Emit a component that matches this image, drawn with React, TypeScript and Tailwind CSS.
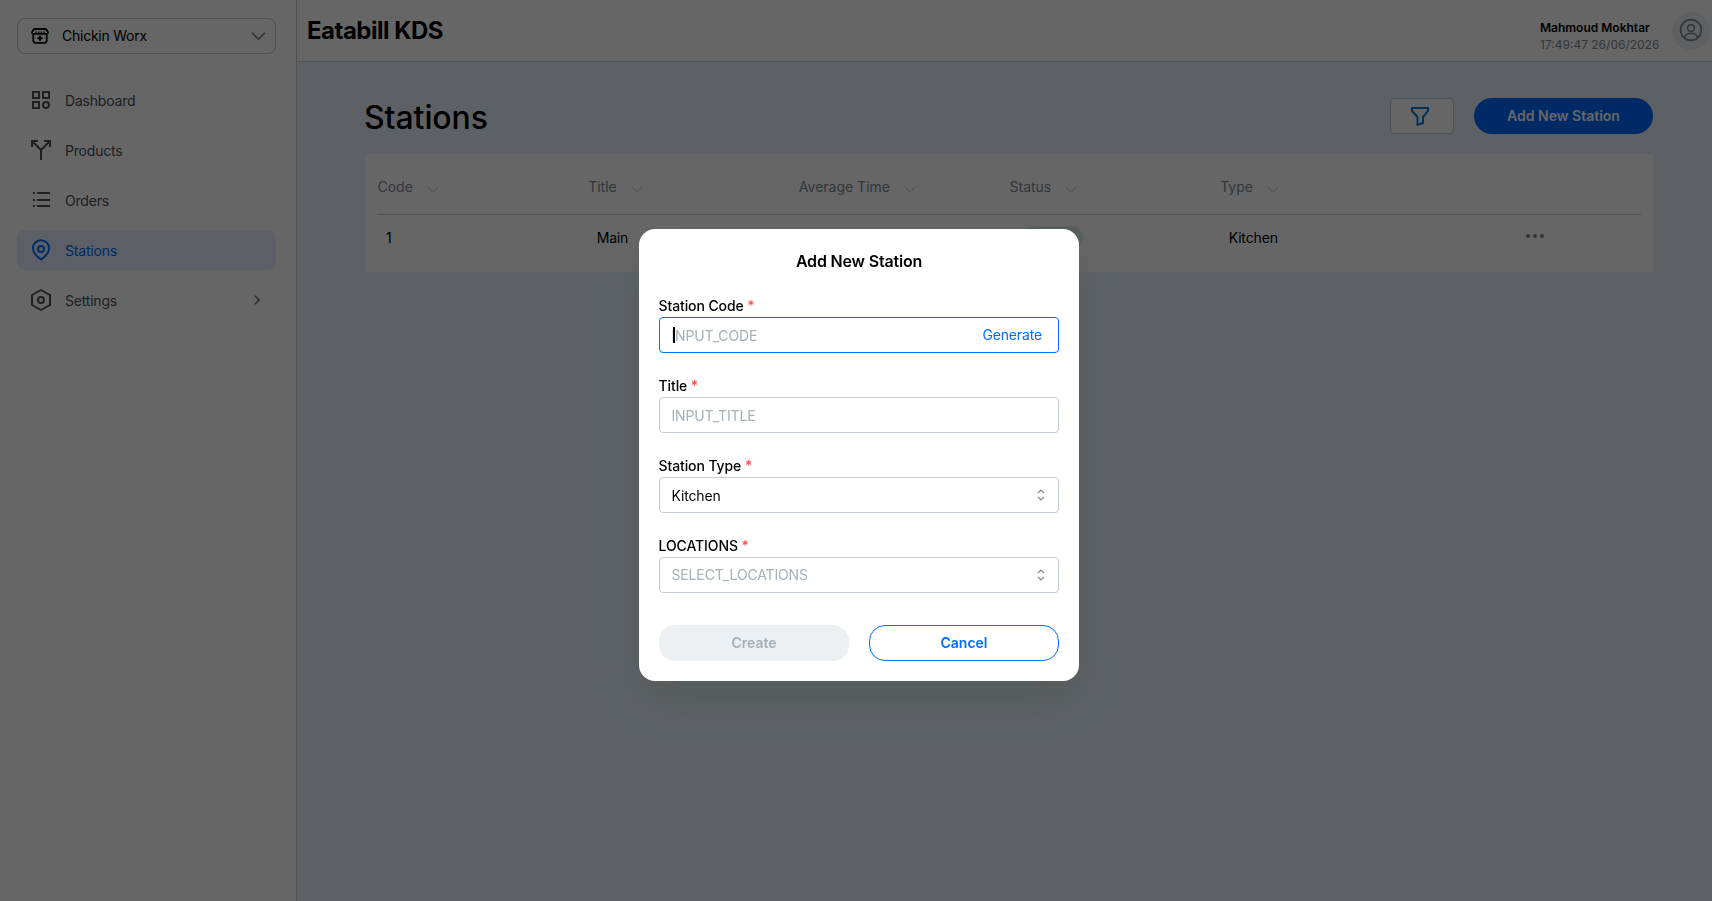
import type { ReactNode } from "react";

const navItems = [
  { id: "dashboard", label: "Dashboard", icon: <DashboardIcon /> },
  { id: "products", label: "Products", icon: <SplitIcon /> },
  { id: "orders", label: "Orders", icon: <ListIcon /> },
  { id: "stations", label: "Stations", icon: <PinIcon />, active: true },
  { id: "settings", label: "Settings", icon: <HexIcon />, nested: true },
];

const columns = ["Code", "Title", "Average Time", "Status", "Type"];

function DashboardIcon() {
  return (
    <svg width="24" height="24" viewBox="0 0 24 24" fill="none" stroke="currentColor" strokeWidth="2" aria-hidden="true">
      <rect x="4" y="4" width="6" height="6" />
      <rect x="14" y="4" width="6" height="6" />
      <rect x="4" y="14" width="6" height="6" />
      <circle cx="17" cy="17" r="3" />
    </svg>
  );
}

function SplitIcon() {
  return (
    <svg width="24" height="24" viewBox="0 0 24 24" fill="none" stroke="currentColor" strokeWidth="2" aria-hidden="true">
      <path d="M3 9V3h6M15 3h6v6M3.5 3.5 12 12v10M20.5 3.5 12 12" />
    </svg>
  );
}

function ListIcon() {
  return (
    <svg width="24" height="24" viewBox="0 0 24 24" fill="none" stroke="currentColor" strokeWidth="2" aria-hidden="true">
      <path d="M8 5h13M8 12h13M8 18h13M4 5h2M4 12h2M4 18h2" />
    </svg>
  );
}

function PinIcon() {
  return (
    <svg width="24" height="24" viewBox="0 0 24 24" fill="none" stroke="currentColor" strokeWidth="2" aria-hidden="true">
      <path d="M12 21.500c2.200-1.500 8-6.300 8-11.300a8 8 0 1 0-16 0c0 5 5.800 9.800 8 11.300Z" strokeLinejoin="round" />
      <circle cx="12" cy="11" r="3" />
    </svg>
  );
}

function HexIcon() {
  return (
    <svg width="24" height="24" viewBox="0 0 24 24" fill="none" stroke="currentColor" strokeWidth="2" aria-hidden="true">
      <path d="m12 2 9 5v10l-9 5-9-5V7l9-5Z" strokeLinejoin="round" />
      <circle cx="12" cy="12" r="3" />
    </svg>
  );
}

function StoreIcon() {
  return (
    <svg width="20" height="20" viewBox="0 0 20 20" fill="none" stroke="currentColor" strokeWidth="1.800" strokeLinejoin="round" aria-hidden="true">
      <path d="M5 3h10c1 0 1.500.3 1.900 1.100l1 1.900c.4 1-.3 1.800-1.300 1.800H3.400C2.400 7.800 1.700 7 2.100 6l1-1.900C3.500 3.300 4 3 5 3Z" />
      <path d="M6 5.500V8M8.700 5.500V8M11.300 5.500V8M14 5.500V8" strokeWidth="1.300" />
      <path d="M3.300 8v6.500c0 1.500.9 2.400 2.400 2.400h8.600c1.500 0 2.400-.9 2.400-2.400V8" />
      <path d="M10 9.800v5M7.500 12.300h5" strokeWidth="2" />
    </svg>
  );
}

function Chevron({ className = "", size = 12 }: { className?: string; size?: number }) {
  return (
    <svg width={size} height={size / 2 + 1} viewBox="0 0 12 7" fill="none" stroke="currentColor" className={className} aria-hidden="true">
      <path d="M.7.7 6 6 11.300.7" strokeWidth="1.400" />
    </svg>
  );
}

function Sidebar() {
  return (
    <aside className="w-[297px] shrink-0 border-r border-[#c3ccd3] bg-white px-[17px] pt-[18px]">
      <div className="flex h-9 w-[259px] items-center rounded-lg border border-[#c3ccd3] pr-[9px] pl-3 text-sm text-black">
        <StoreIcon />
        <span className="ml-3 flex-1 tracking-[-0.25px]">Chickin Worx</span>
        <Chevron size={15} className="text-[#7c8893]" />
      </div>
      <nav className="mt-[26px] flex w-[259px] flex-col gap-2.5">
        {navItems.map((item) => (
          <a
            key={item.id}
            className={`flex h-10 items-center rounded-lg pr-3.5 pl-3 text-sm ${
              item.active ? "bg-[#e7efff] text-[#006aff]" : "text-[#4b5055]"
            }`}
          >
            {item.icon}
            <span className="mt-0.5 ml-3 flex-1 tracking-[-0.2px]">{item.label}</span>
            {item.nested ? <Chevron size={10} className="-rotate-90" /> : null}
          </a>
        ))}
      </nav>
    </aside>
  );
}

function Header() {
  return (
    <header className="flex h-[62px] items-center border-b border-[#c3ccd3] bg-white pr-0.5 pl-2.5">
      <h1 className="mt-px flex-1 text-2xl font-bold tracking-[-0.5px] text-black">Eatabill KDS</h1>
      <div className="mt-2.5 mr-[13px] w-[119px] text-xs leading-[17px] whitespace-nowrap">
        <p className="font-semibold text-black">Mahmoud Mokhtar</p>
        <p className="text-[#7c8893]">17:49:47 26/06/2026</p>
      </div>
      <div className="flex size-[38px] items-center justify-center rounded-full bg-[#ecf0f3] text-[#7c8893]">
        <svg width="24" height="24" viewBox="0 0 24 24" fill="none" stroke="currentColor" strokeWidth="1.600" className="-mt-px" aria-hidden="true">
          <circle cx="12" cy="12" r="10.400" />
          <circle cx="12" cy="10" r="3.400" />
          <path d="M5 19.500c1.500-2.900 4-4.300 7-4.300s5.500 1.400 7 4.300" />
        </svg>
      </div>
    </header>
  );
}

function StationsTable() {
  return (
    <section className="mt-5 h-[118px] rounded bg-white px-3 text-sm">
      <div className="grid h-[61px] grid-cols-6 items-center border-b border-[#c3ccd3] pt-1.5">
        {columns.map((column) => (
          <div key={column} className="flex items-center pl-[0.5px] text-[#7c8893]">
            {column}
            <Chevron className="mt-1 ml-3.5 text-[#d6dbdf]" />
          </div>
        ))}
      </div>
      <div className="grid h-[46px] grid-cols-6 items-center tracking-[-0.15px] text-black">
        <span className="pl-[9px]">1</span>
        <span className="pl-[9px]">Main</span>
        <span className="pl-[9px]">15</span>
        <span className="ml-3 w-[62px] rounded-full bg-[#d8eee0] px-2.5 py-0.5 text-center text-xs leading-5 text-[#2b8a3e]">
          Active
        </span>
        <span className="pl-[9px]">Kitchen</span>
        <span className="-mt-1 flex justify-center gap-[3px] pr-0.5">
          <i className="size-1 rounded-full bg-[#7c8893]" />
          <i className="size-1 rounded-full bg-[#7c8893]" />
          <i className="size-1 rounded-full bg-[#7c8893]" />
        </span>
      </div>
    </section>
  );
}

function Field({ label, focused, children }: { label: string; focused?: boolean; children: ReactNode }) {
  return (
    <div>
      <p className="-ml-[0.5px] text-sm leading-[22px] font-medium tracking-[-0.1px] text-black">
        {label} <span className="text-[#ff4d4f]">*</span>
      </p>
      <div
        className={`flex h-9 items-center rounded border pr-[13px] pl-[11.5px] text-sm tracking-[-0.15px] ${
          focused ? "border-[#006fff]" : "border-[#c3ccd3]"
        }`}
      >
        {children}
      </div>
    </div>
  );
}

function SelectorIcon() {
  return (
    <svg width="8" height="12" viewBox="0 0 8 12" fill="none" stroke="#7c8893" strokeWidth="1.200" aria-hidden="true">
      <path d="M1 4l3-3 3 3M1 8l3 3 3-3" />
    </svg>
  );
}

function AddStationModal() {
  return (
    <div className="fixed inset-0 flex justify-center bg-black/60 pt-[229px] pl-1.5">
      <div className="h-[452px] w-[440px] rounded-2xl bg-white px-5 pt-5 shadow-[0_20px_40px_rgba(74,80,72,0.4)]">
        <h3 className="text-center text-base leading-6 font-semibold tracking-[-0.18px] text-black">Add New Station</h3>
        <div className="mt-[22px] flex flex-col gap-[22px]">
          <Field label="Station Code" focused>
            <div className="relative mt-0.5 flex-1 text-[#a5b0b9]">
              INPUT_CODE
              <span className="absolute top-0.5 left-px -mt-px h-4 w-0.5 bg-black" />
            </div>
            <span className="mr-[3px] text-[#006fff]">Generate</span>
          </Field>
          <Field label="Title">
            <span className="mt-0.5 flex-1 text-[#a5b0b9]">INPUT_TITLE</span>
          </Field>
          <Field label="Station Type">
            <span className="mt-0.5 flex-1 text-black">Kitchen</span>
            <SelectorIcon />
          </Field>
          <Field label="LOCATIONS">
            <span className="flex-1 text-[#a5b0b9]">SELECT_LOCATIONS</span>
            <SelectorIcon />
          </Field>
        </div>
        <div className="mt-8 grid grid-cols-2 gap-5 text-sm font-semibold">
          <button className="h-9 rounded-2xl bg-[#ecf0f3] text-[#a5b0b9]">Create</button>
          <button className="h-9 rounded-2xl border border-[#006fff] text-[#006fff]">Cancel</button>
        </div>
      </div>
    </div>
  );
}

export default function App() {
  return (
    <div className="flex h-screen overflow-hidden bg-[#e9f2ff] font-[Inter,sans-serif]">
      <Sidebar />
      <div className="flex-1">
        <Header />
        <main className="pt-9 pr-[59px] pl-[68px]">
          <div className="flex h-9 items-center">
            <h2 className="mt-[3px] -ml-px flex-1 text-[32px] font-medium tracking-[-0.1px] text-black">Stations</h2>
            <button className="mr-5 flex h-9 w-16 items-center justify-center rounded border border-[#c3ccd3] bg-white pr-1 text-[#0080dd]">
              <svg width="20" height="20" viewBox="0 0 20 20" fill="none" stroke="currentColor" strokeWidth="2" aria-hidden="true">
                <path d="M2 2h16v3l-5 6v6L7.500 18.800V11L2 5V2Z" />
              </svg>
            </button>
            <button className="h-9 w-[179px] rounded-full bg-[#006aff] text-sm font-semibold text-white">
              Add New Station
            </button>
          </div>
          <StationsTable />
        </main>
      </div>
      <AddStationModal />
    </div>
  );
}
